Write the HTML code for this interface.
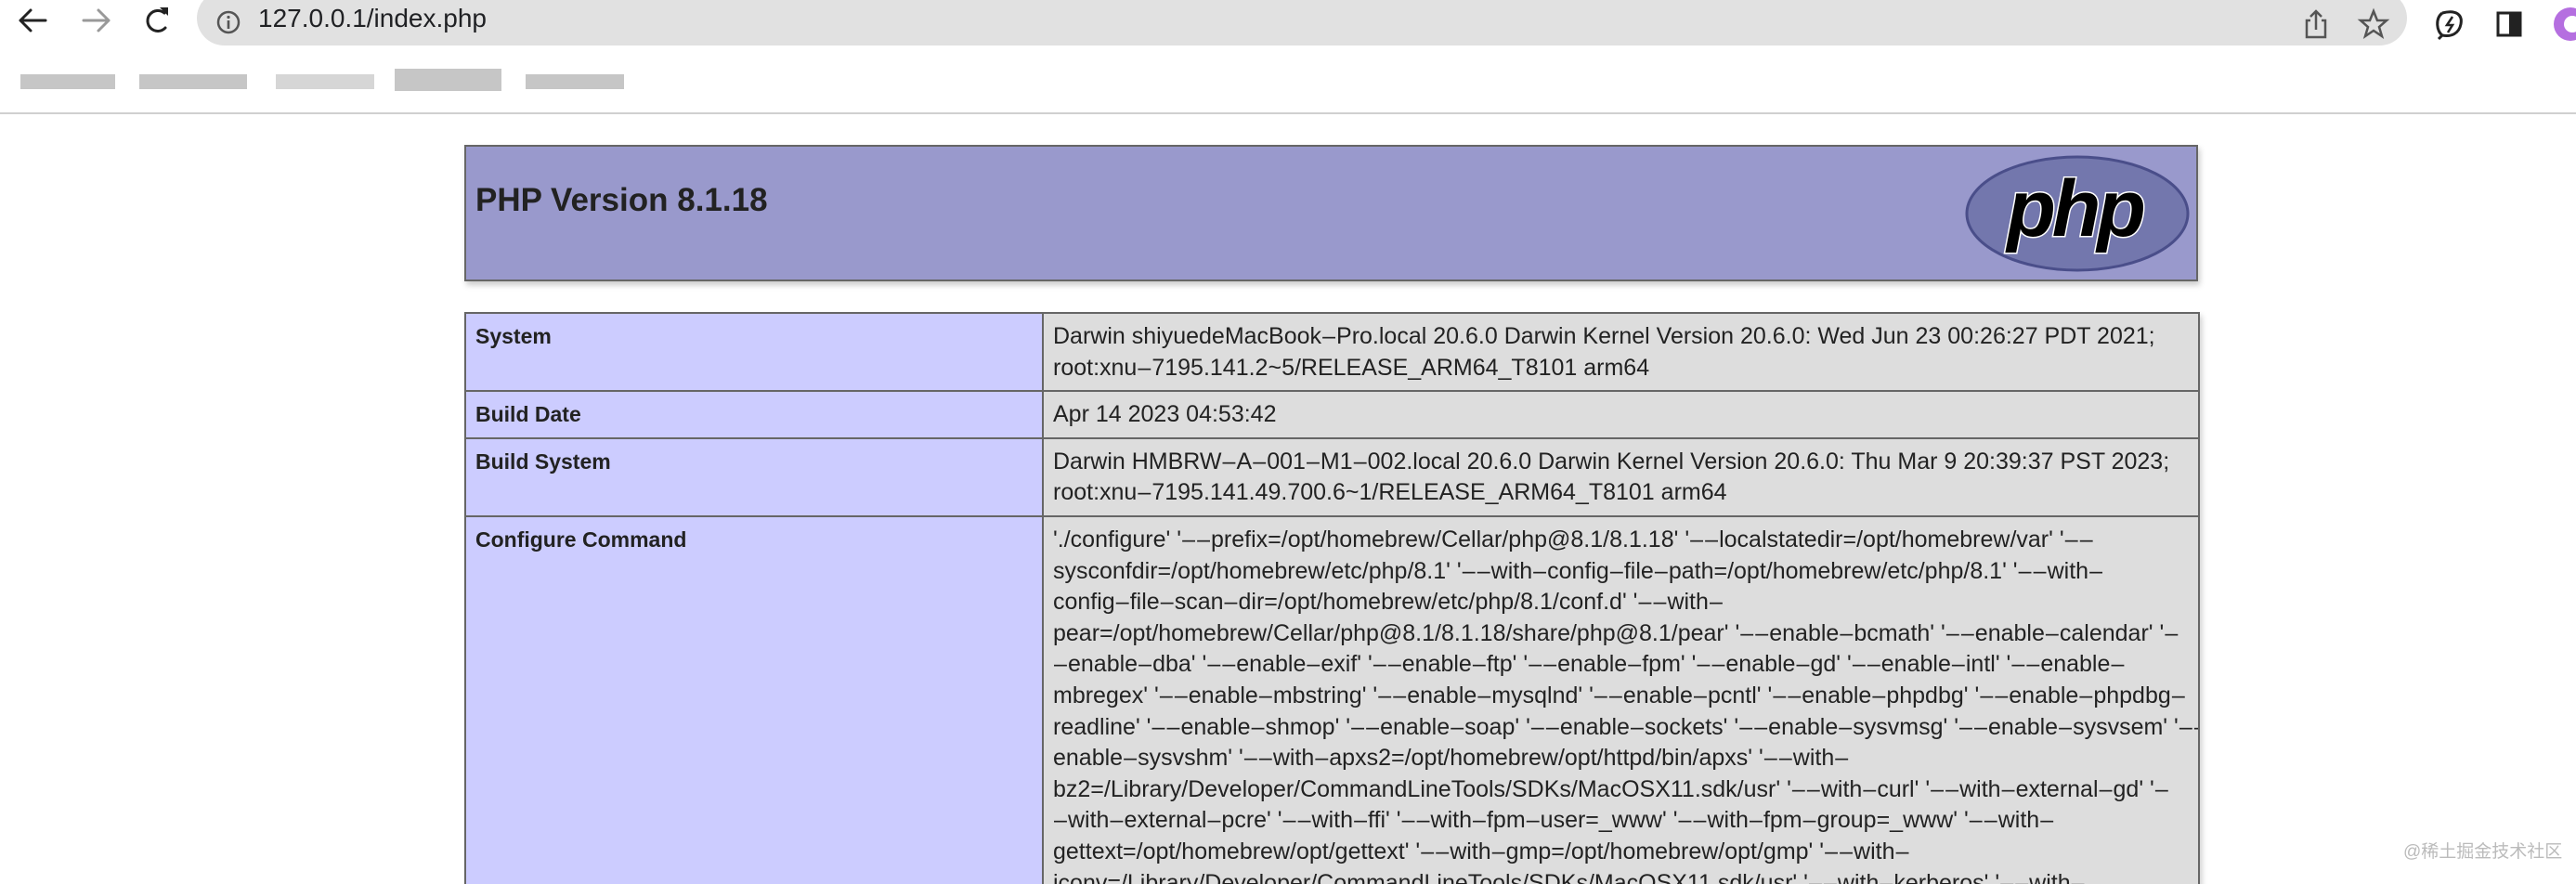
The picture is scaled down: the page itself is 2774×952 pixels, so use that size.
<!DOCTYPE html>
<html style="width:2774px;height:952px;overflow:hidden"><head><meta charset="utf-8"><style>
*{margin:0;padding:0;box-sizing:border-box}
body{width:2774px;height:952px;overflow:hidden;background:#fff;font-family:"Liberation Sans",Arial,sans-serif;position:relative}
.abs{position:absolute}
.addr{left:212px;top:-10px;width:2380px;height:59px;background:#e1e1e1;border-radius:30px}
.url{left:278px;top:4px;font-size:28px;color:#202124}
.sep{left:0;top:121px;width:2774px;height:2px;background:#d0d0d0}
.bm{height:16px;background:#b8b8b8;opacity:.8}
.hdr{left:500px;top:156px;width:1867px;height:147px;background:#9999cc;border:2px solid #666;box-shadow:2px 4px 6px #ccc}
.hdr h1{position:absolute;left:10px;top:38px;font-size:35px;font-weight:bold;color:#222}
.tw{position:absolute;left:499px;top:335px;width:1880px;height:640px;overflow:hidden;padding:1px}
table{width:1867px;border-collapse:collapse;font-size:23px;color:#222;table-layout:fixed;box-shadow:2px 4px 6px #ccc}
td{border:2px solid #666;vertical-align:top;padding:8px 10px 7px 10px;line-height:33.6px}
td.e{background:#ccccff;font-weight:bold}
td.v{background:#dddddd;white-space:nowrap;overflow:hidden;font-size:25px}
.d{display:inline-block;width:16px;text-align:center}
.wm{left:2588px;top:902px;font-size:19px;color:#bbb;font-family:"Liberation Sans","Noto Sans CJK SC",sans-serif}
</style></head><body>
<svg class="abs" style="left:0;top:0" width="320" height="48" viewBox="0 0 320 48">
<g fill="none" stroke-width="3" stroke-linecap="round" stroke-linejoin="round">
<path d="M49 22H22M33 11L22 22L33 33" stroke="#222"/>
<path d="M90 22H117M106 11L117 22L106 33" stroke="#999"/>
<path d="M177 14A11 11 0 1 0 178 30" stroke="#222"/>
</g>
<path d="M172 8L181 8L181 17Z" fill="#222"/>
</svg>
<div class="abs addr"></div>
<svg class="abs" style="left:232px;top:10px" width="28" height="28"><circle cx="14" cy="14" r="11" fill="none" stroke="#555" stroke-width="2.5"/><rect x="12.7" y="12" width="2.6" height="9" fill="#555"/><circle cx="14" cy="8.5" r="1.6" fill="#555"/></svg>
<div class="abs url">127.0.0.1/index.php</div>
<svg class="abs" style="left:2480px;top:8px" width="300" height="36" viewBox="0 0 300 36">
<g fill="none" stroke="#555" stroke-width="2.5">
<path d="M8 14H4V32H24V14H20M14 24V4M8 10L14 4L20 10"/>
<path d="M76 4L80 14L90 14L82 21L85 31L76 25L67 31L70 21L62 14L72 14Z"/>
</g>
<g fill="none" stroke="#222" stroke-width="3"><path d="M150 6C165 2 172 8 170 18C168 28 160 32 150 30L146 34M150 6C142 12 144 26 150 30"/><path d="M161 10L155 19H161L156 27" stroke-width="2.5"/>
<rect x="210" y="6" width="24" height="24"/></g><rect x="222" y="6" width="12" height="24" fill="#222"/>
<circle cx="288" cy="18" r="18" fill="#b56fe0"/><circle cx="290" cy="18" r="9" fill="#fff"/>
</svg>
<div class="abs bm" style="left:22px;top:80px;width:102px"></div>
<div class="abs bm" style="left:150px;top:80px;width:116px"></div>
<div class="abs bm" style="left:297px;top:80px;width:106px;background:#ccc"></div>
<div class="abs bm" style="left:425px;top:74px;width:115px;height:24px"></div>
<div class="abs bm" style="left:566px;top:80px;width:106px"></div>
<div class="abs sep"></div>
<div class="abs hdr"><h1>PHP Version 8.1.18</h1>
<svg class="abs" style="left:1612px;top:8px" width="246" height="128" viewBox="0 0 246 128">
<ellipse cx="123" cy="64" rx="119" ry="61" fill="#7377ad" stroke="#4a4e8a" stroke-width="3"/>
<text x="120" y="88" text-anchor="middle" font-family="Liberation Sans,sans-serif" font-style="italic" font-weight="bold" font-size="86" fill="#000" stroke="#fff" stroke-width="3" paint-order="stroke" letter-spacing="-4">php</text>
</svg></div>
<div class="tw"><table>
<colgroup><col style="width:622px"><col style="width:1245px"></colgroup>
<tr><td class="e">System</td><td class="v">Darwin shiyuedeMacBook-Pro.local 20.6.0 Darwin Kernel Version 20.6.0: Wed Jun 23 00:26:27 PDT 2021;<br>root:xnu-7195.141.2~5/RELEASE_ARM64_T8101 arm64</td></tr>
<tr><td class="e">Build Date</td><td class="v">Apr 14 2023 04:53:42</td></tr>
<tr><td class="e">Build System</td><td class="v">Darwin HMBRW-A-001-M1-002.local 20.6.0 Darwin Kernel Version 20.6.0: Thu Mar 9 20:39:37 PST 2023;<br>root:xnu-7195.141.49.700.6~1/RELEASE_ARM64_T8101 arm64</td></tr>
<tr><td class="e">Configure Command</td><td class="v">'./configure' '--prefix=/opt/homebrew/Cellar/php@8.1/8.1.18' '--localstatedir=/opt/homebrew/var' '--<br>sysconfdir=/opt/homebrew/etc/php/8.1' '--with-config-file-path=/opt/homebrew/etc/php/8.1' '--with-<br>config-file-scan-dir=/opt/homebrew/etc/php/8.1/conf.d' '--with-<br>pear=/opt/homebrew/Cellar/php@8.1/8.1.18/share/php@8.1/pear' '--enable-bcmath' '--enable-calendar' '-<br>-enable-dba' '--enable-exif' '--enable-ftp' '--enable-fpm' '--enable-gd' '--enable-intl' '--enable-<br>mbregex' '--enable-mbstring' '--enable-mysqlnd' '--enable-pcntl' '--enable-phpdbg' '--enable-phpdbg-<br>readline' '--enable-shmop' '--enable-soap' '--enable-sockets' '--enable-sysvmsg' '--enable-sysvsem' '--<br>enable-sysvshm' '--with-apxs2=/opt/homebrew/opt/httpd/bin/apxs' '--with-<br>bz2=/Library/Developer/CommandLineTools/SDKs/MacOSX11.sdk/usr' '--with-curl' '--with-external-gd' '-<br>-with-external-pcre' '--with-ffi' '--with-fpm-user=_www' '--with-fpm-group=_www' '--with-<br>gettext=/opt/homebrew/opt/gettext' '--with-gmp=/opt/homebrew/opt/gmp' '--with-<br>iconv=/Library/Developer/CommandLineTools/SDKs/MacOSX11.sdk/usr' '--with-kerberos' '--with-</td></tr>
</table></div>
<div class="abs wm">@稀土掘金技术社区</div>
<script>
document.querySelectorAll('td.v').forEach(function(td){td.innerHTML=td.innerHTML.replace(/-/g,'<span class="d">–</span>');});
</script>
</body></html>
